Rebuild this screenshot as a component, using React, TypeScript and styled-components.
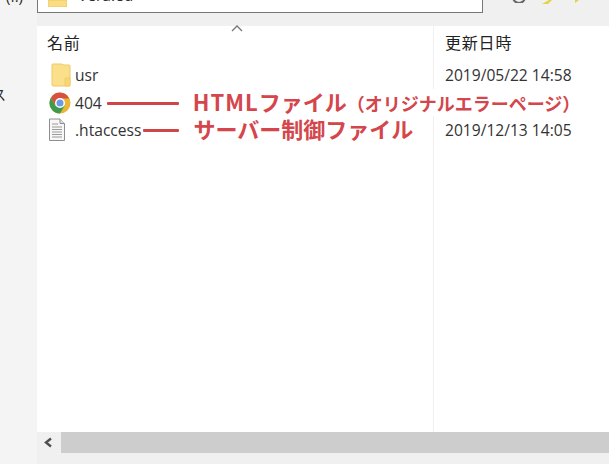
import React from "react";
import styled, { createGlobalStyle } from "styled-components";

const Global = createGlobalStyle`
  html, body { margin: 0; padding: 0; background: #f0f0f0; }
`;

const Page = styled.div`
  width: 609px;
  height: 464px;
  overflow: hidden;
  display: grid;
  grid-template-columns: 37px 1fr;
  grid-template-rows: 26px 406px 21px 11px;
  background: #f0f0f0;
  font-family: "Open Sans", "Noto Sans CJK JP", sans-serif;
  color: #2b2b2b;
`;

const Rail = styled.div`
  grid-row: 1 / 5;
  grid-column: 1;
  background: #f4f4f4;
  overflow: hidden;
  padding-right: 31px;
  display: flex;
  flex-direction: column;
`;

const RailTop = styled.div`
  height: 4px;
  margin-right: -17px;
  display: flex;
  justify-content: flex-end;
  align-items: flex-end;
  font-size: 15px;
  line-height: 15px;
  white-space: nowrap;
`;

const RailGlyph = styled.div`
  margin-top: 81px;
  height: 18px;
  display: flex;
  justify-content: flex-end;
  font-size: 14px;
  line-height: 18px;
  font-family: "Noto Sans CJK JP", sans-serif;
  white-space: nowrap;
`;

const Toolbar = styled.div`
  display: flex;
  justify-content: space-between;
  align-items: flex-start;
  padding-right: 29px;
`;

const AddressBox = styled.div`
  width: 446px;
  height: 13px;
  box-sizing: border-box;
  background: #fff;
  border: 1px solid #777;
  border-top: 0;
  display: flex;
  align-items: flex-end;
  gap: 11px;
  padding-left: 10px;
  overflow: hidden;
`;

const AddressFolder = styled.svg`
  flex: none;
  margin-bottom: 5px;
  display: block;
`;

const AddressText = styled.span`
  font-size: 15.5px;
  line-height: 15px;
  margin-bottom: 9px;
  white-space: nowrap;
`;

const ToolIcons = styled.div`
  display: flex;
  align-items: flex-start;
  gap: 16px;
`;

const Panel = styled.div`
  position: relative;
  background: #fff;
  display: flex;
  flex-direction: column;
`;

const SortCaret = styled.svg`
  position: absolute;
  left: 194px;
  top: -1px;
`;

const Row = styled.div<{ $h: number }>`
  display: flex;
  height: ${(p) => p.$h}px;
  flex: ${(p) => (p.$h ? "none" : "1")};
`;

const NameCell = styled.div`
  width: 396px;
  flex: none;
  display: flex;
  align-items: center;
  padding-left: 10px;
  box-sizing: border-box;
`;

const DateCell = styled.div`
  flex: 1;
  border-left: 1px solid #f0f0f0;
  padding-left: 11px;
  display: flex;
  align-items: center;
  font-size: 15.6px;
  color: #333;
  white-space: nowrap;
`;

const HeaderLabel = styled.span`
  font-family: "Noto Sans CJK JP", sans-serif;
  font-size: 16px;
  line-height: 20px;
  letter-spacing: 0.8px;
  color: #222;
  margin-bottom: 4px;
`;

const IconSlot = styled.div<{ $shift?: number }>`
  width: 28px;
  flex: none;
  display: flex;
  justify-content: center;
  align-items: center;
  transform: translateX(${(p) => p.$shift ?? 0}px);
`;

const FileName = styled.span`
  font-size: 15.6px;
  color: #333;
  white-space: nowrap;
`;

const Connector = styled.div<{ $w: number; $gap: number }>`
  width: ${(p) => p.$w}px;
  height: 3px;
  margin-left: ${(p) => p.$gap}px;
  margin-top: 2px;
  flex: none;
  background: #cf4648;
  border-radius: 1px;
`;

const Callout = styled.span`
  margin-left: 14px;
  margin-bottom: 4px;
  font-family: "Noto Sans CJK JP", sans-serif;
  font-weight: 700;
  font-size: 22px;
  line-height: 22px;
  height: 22px;
  color: #d4464c;
  white-space: nowrap;
`;

const CalloutLatin = styled.span`
  letter-spacing: 1px;
`;

const CalloutSmall = styled.span`
  font-size: 18px;
  line-height: 18px;
`;

const WideCell = styled.div`
  flex: 1;
  display: flex;
  align-items: center;
  padding-left: 10px;
`;

const ScrollBar = styled.div`
  display: flex;
  align-items: stretch;
`;

const ScrollButton = styled.div`
  width: 24px;
  flex: none;
  display: flex;
  justify-content: center;
  align-items: center;
  padding-right: 3px;
  box-sizing: border-box;
`;

const ScrollThumb = styled.div`
  flex: 1;
  background: #cdcdcd;
`;

const Folder = () => (
  <svg width="20" height="24" viewBox="0 0 20 24">
    <path d="M2 1h9l1 1h6a1 1 0 0 1 1 1v19a1 1 0 0 1-1 1H2a1 1 0 0 1-1-1V2a1 1 0 0 1 1-1z" fill="#fbe08c" stroke="#eec967" />
    <path d="M14 23v-8h5v8z" fill="#f9d673" stroke="#eec967" strokeWidth="0.8" />
  </svg>
);

const Chrome = () => (
  <svg width="22" height="22" viewBox="0 0 22 22">
    <circle cx="11" cy="11" r="10.5" fill="#e8b73a" />
    <path d="M11 .5A10.5 10.5 0 0 0 1.9 5.75L6.5 13.5 11 6.5h9.1A10.5 10.5 0 0 0 11 .5z" fill="#d8503f" />
    <path d="M1.9 5.75A10.5 10.5 0 0 0 11 21.5l4.5-7.5-9 0z" fill="#3f9a4e" />
    <circle cx="11" cy="11" r="5" fill="#fff" />
    <circle cx="11" cy="11" r="3.5" fill="#6c9be6" />
  </svg>
);

const Doc = () => (
  <svg width="18" height="24" viewBox="0 0 18 24">
    <path d="M1.5 1H12l4.5 4.5v17h-15z" fill="#f7f7f7" stroke="#8e8e8e" />
    <path d="M12 1v4.5h4.5" fill="#e5e5e5" stroke="#8e8e8e" />
    <path d="M4 6h6M4 9h10M4 11.5h10M4 14h10M4 16.5h10M4 19h10" stroke="#9a9a9a" strokeWidth="1" />
  </svg>
);

export default function App() {
  return (
    <>
      <Global />
      <Page>
        <Rail>
          <RailTop>(I:)</RailTop>
          <RailGlyph>ス</RailGlyph>
        </Rail>
        <Toolbar>
          <AddressBox>
            <AddressFolder width="19" height="7" viewBox="0 0 19 7">
              <rect x="0" y="0" width="19" height="7" fill="#fbdc82" stroke="#eec967" />
            </AddressFolder>
            <AddressText>Vera.ed</AddressText>
          </AddressBox>
          <ToolIcons>
            <svg width="14" height="3" viewBox="0 0 14 3">
              <path d="M1 -3a6 6 0 0 0 12 0" fill="none" stroke="#666" strokeWidth="2" />
            </svg>
            <svg width="38" height="4" viewBox="0 0 38 4">
              <path d="M0 4l7-4h3l-4 4zM33 3l4-3h-4z" fill="#e3d24a" />
            </svg>
          </ToolIcons>
        </Toolbar>
        <Panel>
          <SortCaret width="12" height="7" viewBox="0 0 12 7">
            <path d="M1 6l5-5 5 5" fill="none" stroke="#777" strokeWidth="1.4" />
          </SortCaret>
          <Row $h={35}>
            <NameCell>
              <HeaderLabel>名前</HeaderLabel>
            </NameCell>
            <DateCell>
              <HeaderLabel>更新日時</HeaderLabel>
            </DateCell>
          </Row>
          <Row $h={28}>
            <NameCell>
              <IconSlot><Folder /></IconSlot>
              <FileName>usr</FileName>
            </NameCell>
            <DateCell>2019/05/22 14:58</DateCell>
          </Row>
          <Row $h={27}>
            <WideCell>
              <IconSlot $shift={-1}><Chrome /></IconSlot>
              <FileName>404</FileName>
              <Connector $w={72} $gap={5} />
              <Callout>
                <CalloutLatin>HTML</CalloutLatin>ファイル<CalloutSmall>（オリジナルエラーページ）</CalloutSmall>
              </Callout>
            </WideCell>
          </Row>
          <Row $h={27}>
            <NameCell>
              <IconSlot $shift={-4}><Doc /></IconSlot>
              <FileName>.htaccess</FileName>
              <Connector $w={36} $gap={2} />
              <Callout>サーバー制御ファイル</Callout>
            </NameCell>
            <DateCell>2019/12/13 14:05</DateCell>
          </Row>
          <Row $h={0}>
            <NameCell />
            <DateCell />
          </Row>
        </Panel>
        <ScrollBar>
          <ScrollButton>
            <svg width="10" height="11" viewBox="0 0 10 11">
              <path d="M8 1.5L3 5.5l5 4" fill="none" stroke="#4f4f4f" strokeWidth="2.4" />
            </svg>
          </ScrollButton>
          <ScrollThumb />
        </ScrollBar>
      </Page>
    </>
  );
}
